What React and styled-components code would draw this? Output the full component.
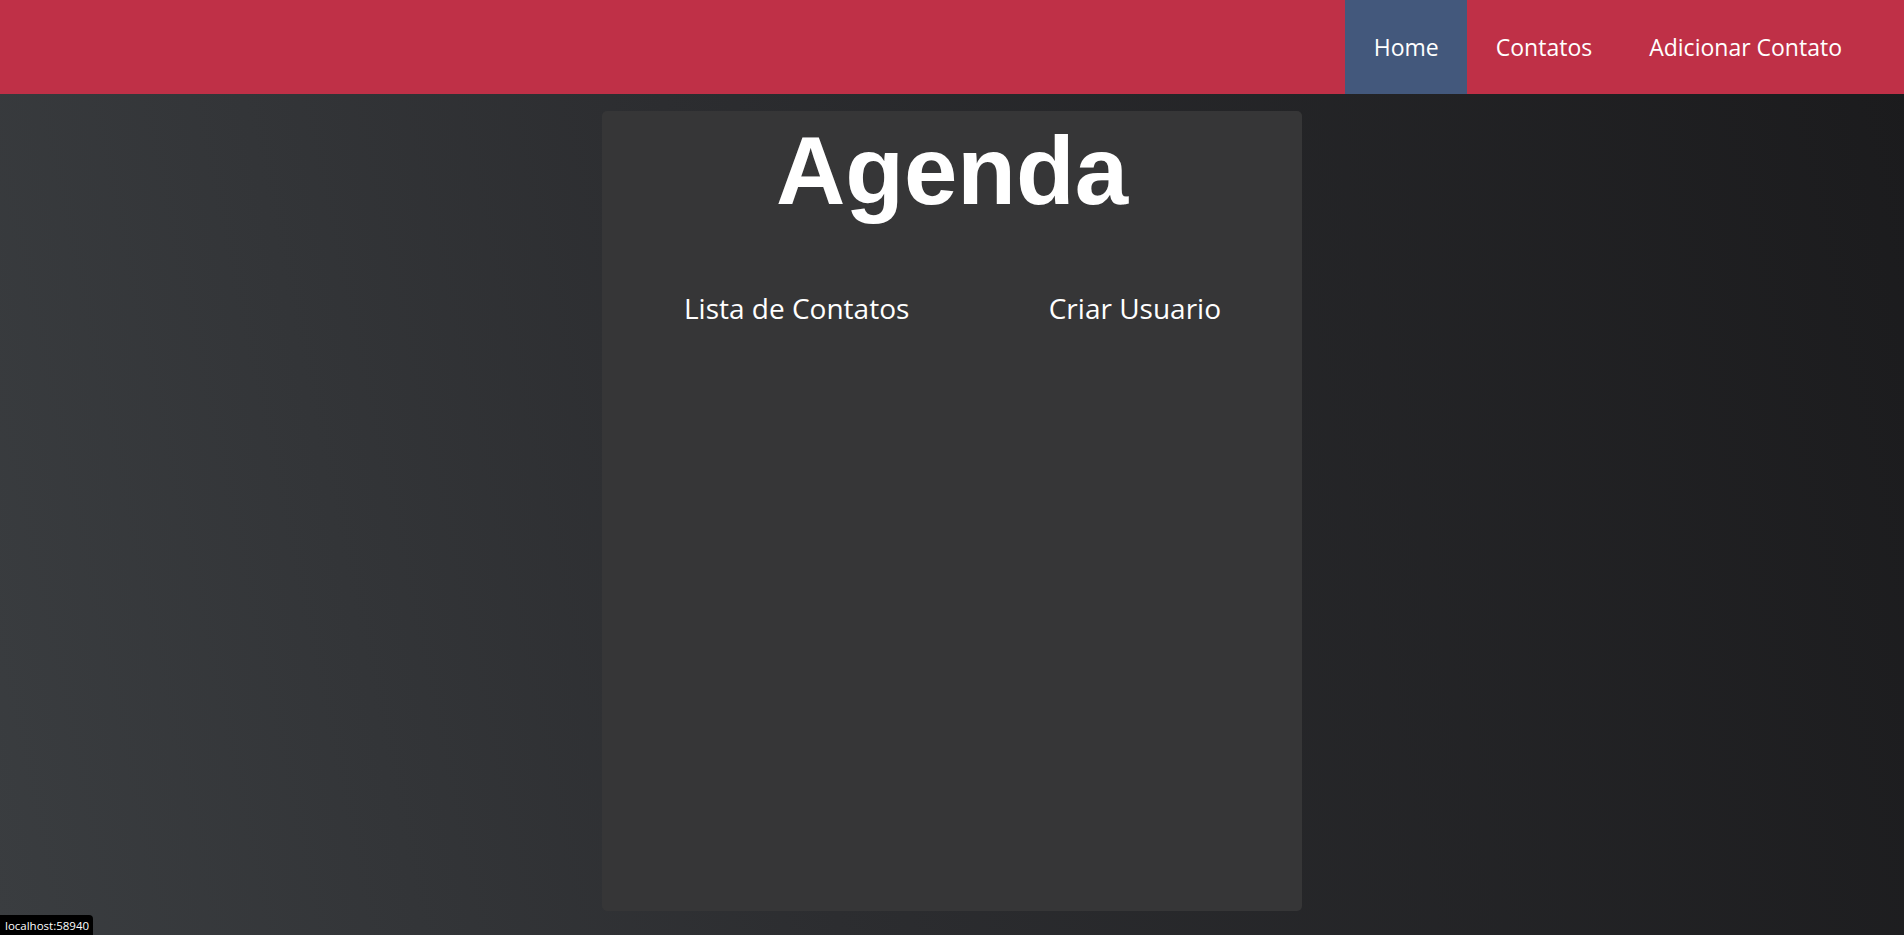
import styled, { createGlobalStyle } from "styled-components";

const GlobalStyle = createGlobalStyle`
  * {
    box-sizing: border-box;
  }
  body {
    margin: 0;
    font-family: "Open Sans", "Liberation Sans", sans-serif;
    color: #ffffff;
  }
`;

export default function App() {
  return (
    <>
      <GlobalStyle />
      <Page>
        <NavBar>
          <NavList>
            <NavLink href="#" $active>
              Home
            </NavLink>
            <NavLink href="#">Contatos</NavLink>
            <NavLink href="#">Adicionar Contato</NavLink>
          </NavList>
        </NavBar>
        <Main>
          <Card>
            <Title>Agenda</Title>
            <Links>
              <CardLink href="#">Lista de Contatos</CardLink>
              <CardLink href="#">Criar Usuario</CardLink>
            </Links>
          </Card>
        </Main>
        <StatusBubble>localhost:58940</StatusBubble>
      </Page>
    </>
  );
}

export const Page = styled.div`
  min-height: 100vh;
  background: linear-gradient(78deg, #3a3d40 0%, #2c2d30 40%, #1b1b1d 100%);
  display: flex;
  flex-direction: column;
`;

export const NavBar = styled.nav`
  height: 94px;
  background-color: #bf3047;
  display: flex;
  justify-content: flex-end;
  padding-right: 33.5px;
`;

export const NavList = styled.div`
  display: flex;
  height: 100%;
`;

export const NavLink = styled.a`
  display: flex;
  align-items: center;
  padding: 0 28.5px;
  height: 100%;
  font-size: 23px;
  color: #ffffff;
  text-decoration: none;
  background-color: ${(p) => (p.$active ? "#43587c" : "transparent")};
`;

export const Main = styled.main`
  display: flex;
  justify-content: center;
  padding-top: 17px;
`;

export const Card = styled.section`
  width: 700px;
  height: 800px;
  background-color: #363637;
  border-radius: 5px;
  padding-top: 5px;
  display: flex;
  flex-direction: column;
`;

export const Title = styled.h1`
  margin: 0;
  text-align: center;
  font-family: "Liberation Sans", Arial, sans-serif;
  font-weight: 700;
  font-size: 96px;
  color: #ffffff;
`;

export const Links = styled.div`
  display: flex;
  justify-content: space-between;
  padding: 0 81px 0 82px;
  margin-top: 63px;
`;

export const CardLink = styled.a`
  font-size: 28px;
  color: #ffffff;
  text-decoration: none;
`;

export const StatusBubble = styled.div`
  position: fixed;
  left: 0;
  bottom: 0;
  height: 20px;
  padding: 0 4px 0 5px;
  display: flex;
  align-items: center;
  background-color: #000000;
  border-top-right-radius: 4px;
  font-family: "Open Sans", sans-serif;
  font-size: 11.5px;
  color: #ffffff;
`;
